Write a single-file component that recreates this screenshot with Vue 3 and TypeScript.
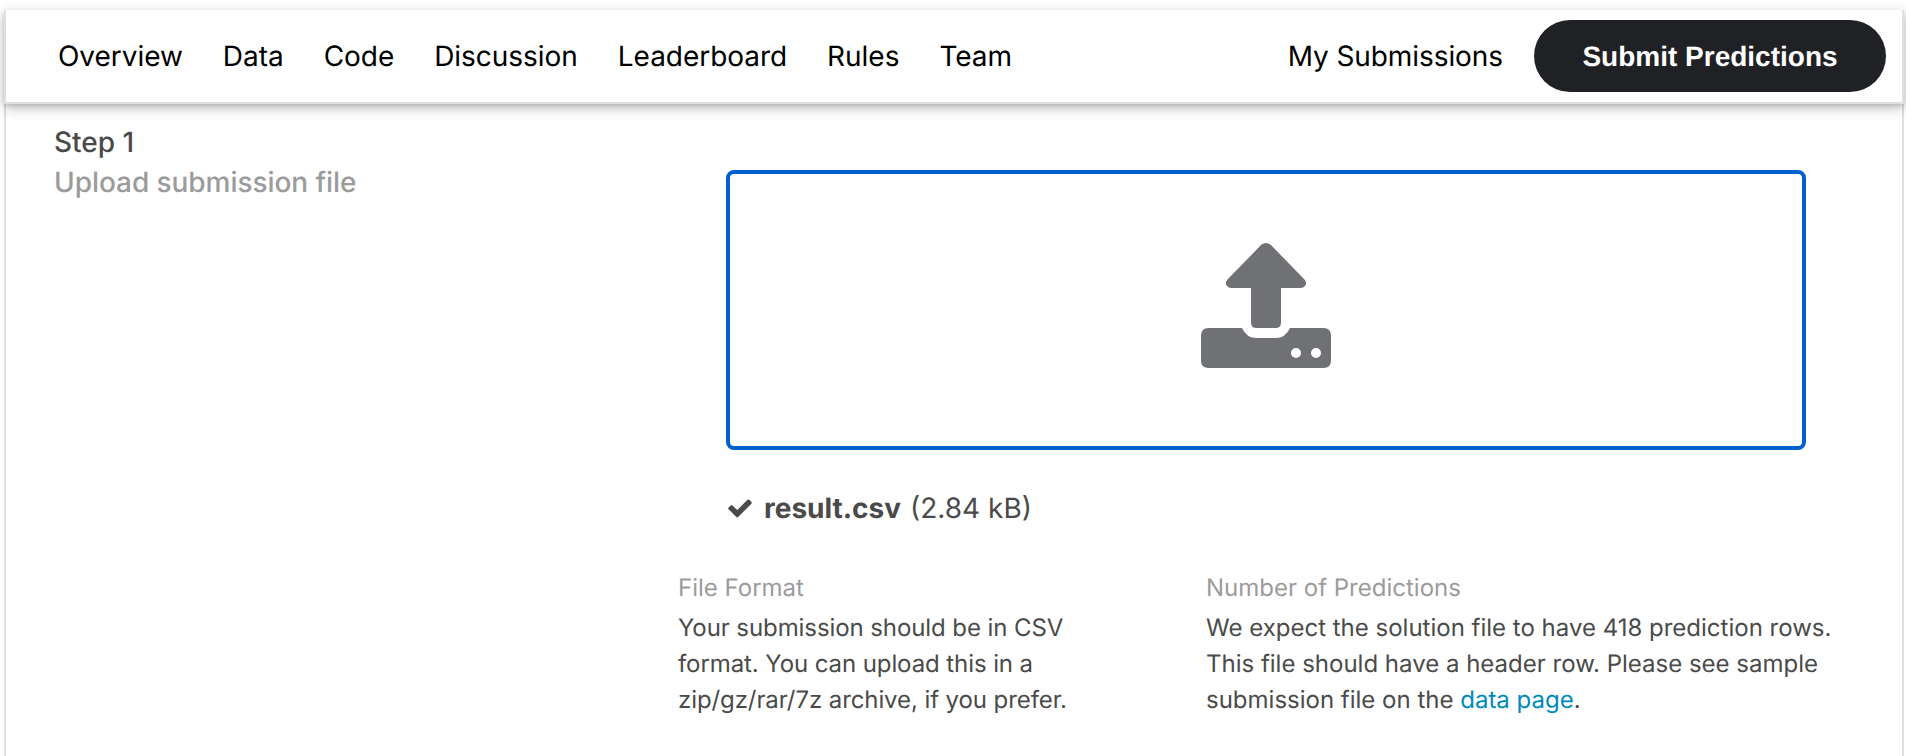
<script setup lang="ts">
const tabs: string[] = ['Overview', 'Data', 'Code', 'Discussion', 'Leaderboard', 'Rules', 'Team']
const file = { name: 'result.csv', size: '(2.84 kB)' }
</script>

<template>
  <div class="page">
    <header class="bar">
      <nav class="tabs">
        <a v-for="tab in tabs" :key="tab" class="tab">{{ tab }}</a>
      </nav>
      <a class="mine">My Submissions</a>
      <button class="submit" type="button">Submit Predictions</button>
    </header>

    <main class="body">
      <section class="step">
        <div class="step-number">Step 1</div>
        <div class="step-title">Upload submission file</div>
      </section>

      <section class="content">
        <div class="drop">
          <svg class="upload" viewBox="0 0 130 125">
            <path d="M60.5 1.6Q65-1.6 69.5 1.6L103.500 36.500Q106.500 40 104 43Q102.500 45 99.500 45H80V79.500Q80 85 74.500 85H55.500Q50 85 50 79.500V45H30.500Q27.500 45 26 43Q23.500 40 26.500 36.500Z" />
            <path fill-rule="evenodd" d="M7.500 85H41Q45.500 95 55.500 95H74.500Q84.500 95 89 85H122.500Q130 85 130 92.500V117.500Q130 125 122.500 125H7.500Q0 125 0 117.500V92.500Q0 85 7.500 85ZM90 110a5 5 0 1 0 10 0a5 5 0 1 0-10 0ZM110 110a5 5 0 1 0 10 0a5 5 0 1 0-10 0Z" />
          </svg>
        </div>

        <div class="file">
          <svg class="check" viewBox="0 0 24 19">
            <path d="M0.600 10.300Q-0.200 9.400 0.600 8.500L2.700 6.400Q3.600 5.600 4.500 6.400L9.200 11.100L19.500 0.800Q20.400 0 21.300 0.800L23.400 2.900Q24.200 3.800 23.400 4.700L10.100 18Q9.200 18.800 8.300 18Z" />
          </svg>
          <strong class="file-name">{{ file.name }}</strong>
          <span class="file-size">{{ file.size }}</span>
        </div>

        <div class="notes">
          <div class="note format">
            <h3>File Format</h3>
            <p>Your submission should be in CSV<br />format. You can upload this in a<br />zip/gz/rar/7z archive, if you prefer.</p>
          </div>
          <div class="note">
            <h3>Number of Predictions</h3>
            <p>We expect the solution file to have 418 prediction rows.<br />This file should have a header row. Please see sample<br />submission file on the <a class="link">data page</a>.</p>
          </div>
        </div>
      </section>
    </main>
  </div>
</template>

<style>
body {
  background: #fff;
  overflow: hidden;
}
</style>

<style scoped>
.page {
  box-sizing: border-box;
  height: 756px;
  padding: 10px 2px 0 4px;
  overflow: hidden;
  background: #fff;
  font-family: Inter, "Liberation Sans", sans-serif;
  color: #4a4a4a;
  white-space: nowrap;
  text-rendering: geometricPrecision;
}
.bar {
  position: relative;
  box-sizing: border-box;
  display: flex;
  align-items: center;
  height: 94px;
  padding: 0 16px 0 32px;
  background: #fff;
  border: 2px solid #dee0df;
  border-top: 0;
  box-shadow: 0 4px 12px rgba(0, 0, 0, 0.25), 0 2px 4px rgba(0, 0, 0, 0.12);
  color: #000;
  font-size: 28px;
  line-height: 40px;
}
.tabs {
  display: flex;
  flex: 1;
  letter-spacing: -0.04px;
}
.tab {
  padding: 0 20px;
}
.mine {
  margin-right: 31px;
  letter-spacing: -0.08px;
}
.submit {
  width: 352px;
  height: 72px;
  padding: 1px 0 0;
  border: 0;
  border-radius: 36px;
  background: #202124;
  color: #fff;
  font-family: "Liberation Sans", Arial, sans-serif;
  font-size: 28px;
  font-weight: 700;
  text-rendering: geometricPrecision;
}
.body {
  display: flex;
  box-sizing: border-box;
  height: 652px;
  border: solid #dee0df;
  border-width: 0 2px;
}
.step {
  width: 624px;
  padding: 18px 0 0 48px;
  font-size: 28px;
  font-weight: 500;
  line-height: 40px;
}
.step-title {
  color: #9b9b9b;
  letter-spacing: -0.06px;
}
.content {
  flex: 1;
  padding-top: 66px;
}
.drop {
  box-sizing: border-box;
  display: flex;
  justify-content: center;
  width: 1080px;
  height: 280px;
  margin-left: 48px;
  padding-top: 69px;
  border: 4px solid #0060d0;
  border-radius: 8px;
}
.upload {
  width: 130px;
  height: 125px;
  fill: #707175;
}
.file {
  display: flex;
  align-items: center;
  margin: 38px 0 0 50px;
  font-size: 28px;
  line-height: 40px;
}
.check {
  width: 24px;
  height: 19px;
  margin-right: 12px;
  fill: #4a4a4a;
}
.file-name {
  font-weight: 700;
}
.file-size {
  margin-left: 9px;
}
.notes {
  display: flex;
  margin-top: 42px;
  font-size: 24px;
  line-height: 36px;
}
.note {
  width: 528px;
}
.note h3 {
  margin: 0 0 4px;
  color: #9b9b9b;
  font-size: 24px;
  font-weight: 400;
}
.note p {
  margin: 0;
}
.format p {
  letter-spacing: -0.09px;
}
.link {
  color: #008abc;
}
</style>
